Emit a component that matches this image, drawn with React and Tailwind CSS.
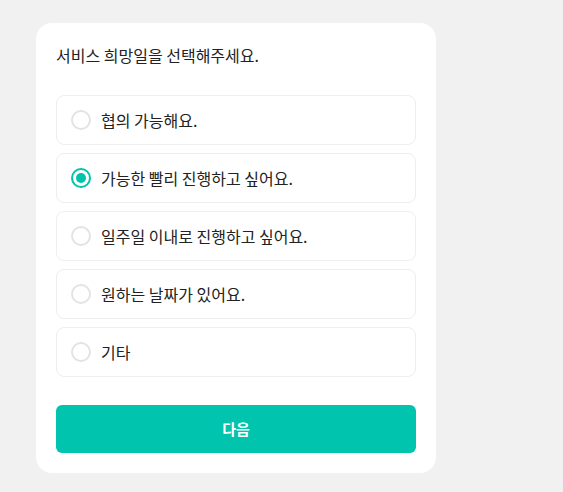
const options = [
  '협의 가능해요.',
  '가능한 빨리 진행하고 싶어요.',
  '일주일 이내로 진행하고 싶어요.',
  '원하는 날짜가 있어요.',
  '기타',
]

export default function App() {
  const selected = 1

  return (
    <div
      className="min-h-screen bg-[#f1f1f1] pt-[23px] pl-[36px]"
      style={{ fontFamily: '"Noto Sans CJK KR", "Noto Sans", sans-serif' }}
    >
      <div className="w-[400px] bg-white rounded-[16px] p-5">
        <h1 className="text-base leading-6 text-[#222] font-normal">
          서비스 희망일을 선택해주세요.
        </h1>

        <div className="mt-7 flex flex-col gap-2">
          {options.map((label, i) => (
            <div
              key={label}
              className="h-[50px] flex items-center gap-[10px] pl-[14px] border border-[#eeeeee] rounded-[8px]"
            >
              {i === selected ? (
                <span className="w-5 h-5 rounded-full border-2 border-[#00c4ad] flex items-center justify-center">
                  <span className="w-[10px] h-[10px] rounded-full bg-[#00c4ad]" />
                </span>
              ) : (
                <span className="w-5 h-5 rounded-full border-2 border-[#e3e3e3]" />
              )}
              <span className="text-base text-[#222]">{label}</span>
            </div>
          ))}
        </div>

        <button className="mt-7 w-full h-12 bg-[#00c4ad] text-white text-[15px] font-bold rounded-[6px]">
          다음
        </button>
      </div>
    </div>
  )
}
